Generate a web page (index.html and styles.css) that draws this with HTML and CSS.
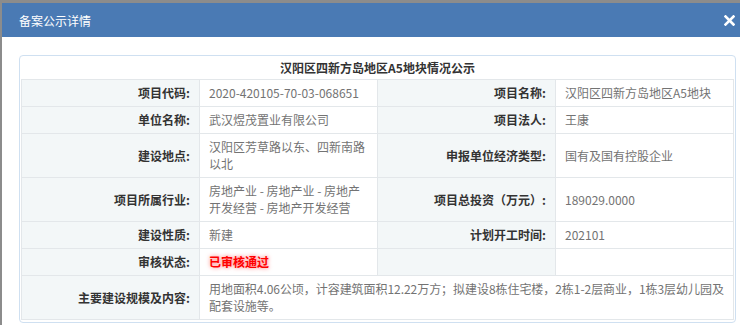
FILE: index.html
```html
<!DOCTYPE html>
<html lang="zh-CN">
<head>
<meta charset="utf-8">
<title>备案公示详情</title>
<link rel="stylesheet" href="styles.css">
</head>
<body>
<div class="dialog">
  <div class="dialog-header">
    <span class="dialog-title">备案公示详情</span>
    <svg class="close" width="11" height="11" viewBox="0 0 11 11" aria-label="关闭">
      <path d="M1.5 1.5 L9.5 9.5 M9.5 1.5 L1.5 9.5" stroke="#fff" stroke-width="2.6" stroke-linecap="square"/>
    </svg>
  </div>
  <div class="dialog-body">
    <div class="panel">
      <div class="panel-title">汉阳区四新方岛地区A5地块情况公示</div>
      <table class="info">
        <tr>
          <th>项目代码:</th><td>2020-420105-70-03-068651</td>
          <th>项目名称:</th><td>汉阳区四新方岛地区A5地块</td>
        </tr>
        <tr>
          <th>单位名称:</th><td>武汉煜茂置业有限公司</td>
          <th>项目法人:</th><td>王康</td>
        </tr>
        <tr>
          <th>建设地点:</th><td>汉阳区芳草路以东、四新南路以北</td>
          <th>申报单位经济类型:</th><td>国有及国有控股企业</td>
        </tr>
        <tr>
          <th>项目所属行业:</th><td>房地产业 - 房地产业 - 房地产开发经营 - 房地产开发经营</td>
          <th>项目总投资（万元）:</th><td>189029.0000</td>
        </tr>
        <tr>
          <th>建设性质:</th><td>新建</td>
          <th>计划开工时间:</th><td>202101</td>
        </tr>
        <tr>
          <th>审核状态:</th><td><span class="status">已审核通过</span></td>
          <th></th><td></td>
        </tr>
        <tr>
          <th>主要建设规模及内容:</th>
          <td colspan="3" class="wide">用地面积4.06公顷，计容建筑面积12.22万方；拟建设8栋住宅楼，2栋1-2层商业，1栋3层幼儿园及配套设施等。</td>
        </tr>
      </table>
    </div>
  </div>
</div>
</body>
</html>
```
FILE: styles.css
```css
html, body {
  margin: 0;
  padding: 0;
}
body {
  background: #8c8c8c;
  font-family: "Noto Sans CJK SC", "Noto Sans", sans-serif;
  font-size: 12px;
  overflow: hidden;
}
.dialog {
  margin: 3px 0 0 2px;
  background: #fff;
  height: 322px;
}
.dialog-header {
  height: 34px;
  background: #4a7ab4;
  display: flex;
  align-items: center;
  justify-content: space-between;
  padding: 0 5px 0 17px;
}
.dialog-title {
  color: #fff;
  font-size: 12px;
}
.close {
  display: block;
  margin-top: 1px;
}
.dialog-body {
  padding: 18px 4px 0 17px;
}
.panel {
  border: 1px solid #cfe0f1;
  border-radius: 4px;
  padding: 0 1px 2px 1px;
}
.panel-title {
  height: 23px;
  line-height: 23px;
  text-align: center;
  font-weight: bold;
  color: #333;
  font-size: 12px;
}
.info {
  width: 100%;
  border-collapse: collapse;
  table-layout: fixed;
}
.info th, .info td {
  border: 1px solid #e3e7ea;
  padding: 4px 9px 5px;
  line-height: 17px;
  vertical-align: middle;
  font-size: 12px;
}
.info th {
  background: #f3f7f8;
  color: #333;
  font-weight: bold;
  text-align: right;
  width: 25%;
}
.info td {
  color: #737373;
  text-align: left;
  width: 25%;
}
.info td.wide {
  padding-right: 2px;
  letter-spacing: -0.05px;
}
.status {
  color: #ff0000;
  font-weight: bold;
  text-shadow: 0 0 4px rgba(255, 0, 0, 0.6);
}
```
